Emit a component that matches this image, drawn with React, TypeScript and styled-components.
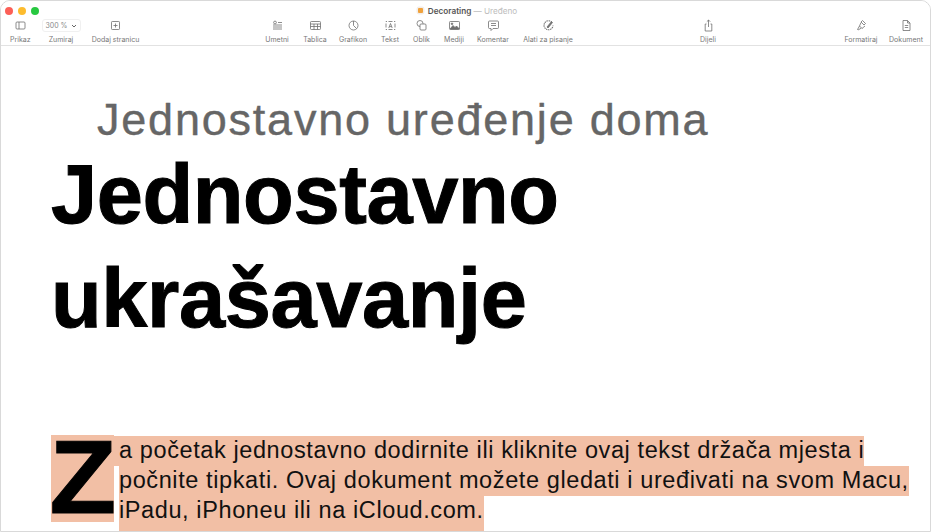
import styled, { createGlobalStyle } from 'styled-components';
import type { ReactNode } from 'react';

const GlobalStyle = createGlobalStyle`
  html, body {
    margin: 0;
    padding: 0;
    height: 100%;
    background: #fff;
    overflow: hidden;
  }
`;

const Window = styled.div`
  width: 931px;
  height: 532px;
  box-sizing: border-box;
  display: flex;
  flex-direction: column;
  background: #fff;
  border: 1px solid #d9d9d9;
  border-radius: 10px 10px 0 0;
  overflow: hidden;
  font-family: Inter, 'Liberation Sans', sans-serif;
`;

const Header = styled.header`
  height: 44px;
  flex: none;
  display: flex;
  flex-direction: column;
  background: #fff;
  border-bottom: 1px solid #e2e2e2;
`;

const TitleRow = styled.div`
  height: 15px;
  display: grid;
  grid-template-columns: 1fr auto 1fr;
  align-items: center;
  padding: 2px 0 0 4px;
`;

const Lights = styled.div`
  display: flex;
  gap: 5px;
`;

const Light = styled.span<{ $color: string }>`
  width: 8px;
  height: 8px;
  border-radius: 50%;
  background: ${(p) => p.$color};
`;

const DocTitle = styled.div`
  display: flex;
  align-items: center;
  gap: 5px;
  font-size: 8.2px;
  font-weight: 600;
  color: #555;
`;

const DocBadge = styled.span`
  width: 5px;
  height: 5px;
  border-radius: 1px;
  background: #f0a23c;
  box-shadow: 0 0 0 1.5px #f3eeea;
`;

const DocState = styled.span`
  font-weight: 400;
  color: #bdbdbd;
`;

const Tools = styled.div`
  display: flex;
  align-items: flex-start;
  padding-top: 1px;
`;

const Group = styled.div<{ $width: number }>`
  display: flex;
  width: ${(p) => p.$width}px;
  flex: none;
`;

const Tool = styled.div<{ $width: number }>`
  width: ${(p) => p.$width}px;
  flex: none;
  display: flex;
  flex-direction: column;
  align-items: center;
  gap: 4px;
  font-size: 7px;
  line-height: 8px;
  color: #777;
  white-space: nowrap;
`;

const IconSlot = styled.div`
  height: 13px;
  display: flex;
  align-items: center;
  justify-content: center;
`;

const ZoomBox = styled.div`
  width: 39px;
  height: 13px;
  box-sizing: border-box;
  display: flex;
  align-items: center;
  justify-content: center;
  gap: 3px;
  border: 1px solid #f0f0f0;
  border-radius: 3px;
  font-size: 7px;
  color: #8a8a8a;
`;

const Document = styled.main`
  flex: 1;
  min-height: 0;
  padding: 50px 0 0 50px;
  overflow: hidden;
  font-family: 'Liberation Sans', Arial, sans-serif;
`;

const Subtitle = styled.h2`
  margin: 0 0 0 46px;
  font-size: 45px;
  line-height: 47px;
  font-weight: 400;
  letter-spacing: 1.78px;
  color: #666;
  white-space: nowrap;
  -webkit-text-stroke: 0.4px #666;
`;

const Title = styled.h1`
  margin: 0;
  font-size: 83px;
  line-height: 104px;
  font-weight: 700;
  color: #000;
  letter-spacing: -0.4px;
  -webkit-text-stroke: 1px #000;
`;

const Body = styled.p`
  margin: 84px 0 0;
  width: 860px;
  font-size: 23.5px;
  line-height: 30px;
  letter-spacing: 0.6px;
  color: #111;
`;

const DropCap = styled.span`
  float: left;
  width: 63px;
  height: 87px;
  margin-right: 5px;
  text-align: center;
  background: #f2bfa5;
  color: #000;
  font-size: 104px;
  line-height: 84px;
  letter-spacing: 0;
  font-weight: 700;
  -webkit-text-stroke: 1px #000;
`;

const DropLetter = styled.span`
  display: inline-block;
  transform: scaleX(1.05);
`;

const Highlight = styled.span`
  margin-left: -5px;
  padding: 1px 0 3px 5px;
  background: #f2bfa5;
`;

const LastLine = styled.span`
  padding-bottom: 11px;
  background: #f2bfa5;
`;

const Glyph = ({ children }: { children: ReactNode }) => (
  <svg width="13" height="13" viewBox="0 0 13 13" fill="none" stroke="#707070" strokeWidth="0.8">
    {children}
  </svg>
);

const icons: Record<string, ReactNode> = {
  prikaz: (
    <Glyph>
      <rect x="2" y="3" width="9" height="7" rx="1" />
      <path d="M5 3v7" />
    </Glyph>
  ),
  dodaj: (
    <Glyph>
      <rect x="2.5" y="2.5" width="8" height="8" rx="0.8" />
      <path d="M6.5 4.5v4M4.5 6.5h4" />
    </Glyph>
  ),
  umetni: (
    <Glyph>
      <circle cx="4" cy="3.5" r="1.4" />
      <path d="M7 3.5h4M2 6h9M2 8h9M2 10h9" />
    </Glyph>
  ),
  tablica: (
    <Glyph>
      <rect x="1.5" y="2.5" width="10" height="8" rx="0.8" />
      <path d="M1.5 5h10M1.5 7.5h10M5 5v5.5M8.5 5v5.5" />
    </Glyph>
  ),
  grafikon: (
    <Glyph>
      <circle cx="6.5" cy="6.5" r="4.5" />
      <path d="M6.5 2v4.5l3 3" />
    </Glyph>
  ),
  tekst: (
    <Glyph>
      <path d="M2 3v-.5h1M10 2.5h1V3M11 10v.5h-1M3 10.5H2V10M2 4.5v4M11 4.5v4M4.5 2.5h4M4.5 10.5h4" />
      <path d="M4.8 9l1.7-4.5L8.2 9M5.4 7.6h2.2" />
    </Glyph>
  ),
  oblik: (
    <Glyph>
      <circle cx="5" cy="4.5" r="3" />
      <rect x="5" y="5" width="6" height="6" rx="1" fill="#fff" />
    </Glyph>
  ),
  mediji: (
    <Glyph>
      <rect x="1.5" y="2.5" width="10" height="8" rx="0.8" />
      <path d="M2 10l3-3.5 2 2 1.5-1.5 3 3z" fill="#707070" />
      <circle cx="4" cy="4.8" r="0.8" fill="#707070" />
    </Glyph>
  ),
  komentar: (
    <Glyph>
      <path d="M2.5 2h8a1 1 0 0 1 1 1v5.5a1 1 0 0 1-1 1H6L4 11.5V9.5H2.5a1 1 0 0 1-1-1V3a1 1 0 0 1 1-1z" />
      <path d="M4 4.5h5M4 6.5h5" />
    </Glyph>
  ),
  alati: (
    <Glyph>
      <path d="M9.8 3.2A4.5 4.5 0 1 0 11 6.5" strokeDasharray="1.4 0.7" strokeWidth="1.1" />
      <path d="M5 8l4.5-5.5 1 1L6 9z" fill="#707070" />
    </Glyph>
  ),
  dijeli: (
    <Glyph>
      <path d="M4.5 5H3.2v7h6.6V5H8.5M6.5 8V1M4.8 2.7l1.7-1.7 1.7 1.7" />
    </Glyph>
  ),
  formatiraj: (
    <Glyph>
      <path d="M7.5 1.5l3 3-1.5 1.5-3-3zM6 3.5L4.5 7 7 9.5 10 7" />
      <path d="M4.5 7l-2 3.5L3 11l3.5-2" />
    </Glyph>
  ),
  dokument: (
    <Glyph>
      <path d="M3 1.5h4.5L10 4v7.5H3zM7.5 1.5V4H10M4.8 6.5h3.4M4.8 8.5h3.4" />
    </Glyph>
  ),
};

const insertTools = [
  { label: 'Umetni', icon: 'umetni', width: 38 },
  { label: 'Tablica', icon: 'tablica', width: 38 },
  { label: 'Grafikon', icon: 'grafikon', width: 38 },
  { label: 'Tekst', icon: 'tekst', width: 36 },
  { label: 'Oblik', icon: 'oblik', width: 27 },
  { label: 'Mediji', icon: 'mediji', width: 38 },
  { label: 'Komentar', icon: 'komentar', width: 40 },
  { label: 'Alati za pisanje', icon: 'alati', width: 70 },
];

const App = () => {
  return (
    <>
      <GlobalStyle />
      <Window>
        <Header>
          <TitleRow>
            <Lights>
              <Light $color="#fc5f57" />
              <Light $color="#fdbc2e" />
              <Light $color="#28c840" />
            </Lights>
            <DocTitle>
              <DocBadge />
              <span>
                Decorating <DocState>— Uređeno</DocState>
              </span>
            </DocTitle>
            <span />
          </TitleRow>
          <Tools>
            <Group $width={257}>
              <Tool $width={38.5}>
                <IconSlot>{icons.prikaz}</IconSlot>
                Prikaz
              </Tool>
              <Tool $width={43}>
                <IconSlot>
                  <ZoomBox>
                    300 %
                    <svg width="6" height="6" viewBox="0 0 6 6" fill="none" stroke="#555" strokeWidth="0.9">
                      <path d="M1 2l2 2 2-2" />
                    </svg>
                  </ZoomBox>
                </IconSlot>
                Zumiraj
              </Tool>
              <Tool $width={66}>
                <IconSlot>{icons.dodaj}</IconSlot>
                Dodaj stranicu
              </Tool>
            </Group>
            <Group $width={325}>
              {insertTools.map((tool) => (
                <Tool key={tool.label} $width={tool.width}>
                  <IconSlot>{icons[tool.icon]}</IconSlot>
                  {tool.label}
                </Tool>
              ))}
            </Group>
            <Group $width={252}>
              <Tool $width={250}>
                <IconSlot>{icons.dijeli}</IconSlot>
                Dijeli
              </Tool>
            </Group>
            <Tool $width={52}>
              <IconSlot>{icons.formatiraj}</IconSlot>
              Formatiraj
            </Tool>
            <Tool $width={38}>
              <IconSlot>{icons.dokument}</IconSlot>
              Dokument
            </Tool>
          </Tools>
        </Header>
        <Document>
          <Subtitle>Jednostavno uređenje doma</Subtitle>
          <Title>
            Jednostavno
            <br />
            ukrašavanje
          </Title>
          <Body>
            <DropCap>
              <DropLetter>Z</DropLetter>
            </DropCap>
            <Highlight>
              a početak jednostavno dodirnite ili kliknite ovaj tekst držača mjesta i počnite tipkati. Ovaj dokument
              možete gledati i uređivati na svom Macu, <LastLine>iPadu, iPhoneu ili na iCloud.com.</LastLine>
            </Highlight>
          </Body>
        </Document>
      </Window>
    </>
  );
};

export default App;
